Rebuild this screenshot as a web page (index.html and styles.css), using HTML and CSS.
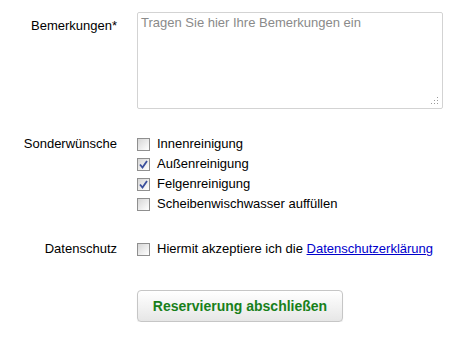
FILE: index.html
```html
<!DOCTYPE html>
<html>
<head>
    <title>Reservierung</title>
    <link rel="stylesheet" href="styles.css">
</head>
<body>
    <form class="booking-form">
        <div class="row row-notes">
            <label class="row-label" for="notes">Bemerkungen*</label>
            <div class="notes-wrap">
                <textarea id="notes" class="notes" placeholder="Tragen Sie hier Ihre Bemerkungen ein"></textarea>
                <svg class="grip" width="10" height="9" viewBox="0 0 10 9">
                    <rect x="7" y="0" width="1" height="1"/>
                    <rect x="4" y="3" width="1" height="1"/>
                    <rect x="7" y="3" width="1" height="1"/>
                    <rect x="1" y="6" width="1" height="1"/>
                    <rect x="4" y="6" width="1" height="1"/>
                    <rect x="7" y="6" width="1" height="1"/>
                </svg>
            </div>
        </div>

        <div class="row row-extras">
            <span class="row-label">Sonderwünsche</span>
            <div class="options">
                <label class="option"><span class="box"></span>Innenreinigung</label>
                <label class="option"><span class="box checked"><svg width="9" height="9" viewBox="0 0 9 9"><path d="M1 4.5 L3.5 7.5 L8 1" fill="none" stroke="#3a4f9c" stroke-width="1.8"/></svg></span>Außenreinigung</label>
                <label class="option"><span class="box checked"><svg width="9" height="9" viewBox="0 0 9 9"><path d="M1 4.5 L3.5 7.5 L8 1" fill="none" stroke="#3a4f9c" stroke-width="1.8"/></svg></span>Felgenreinigung</label>
                <label class="option"><span class="box"></span>Scheibenwischwasser auffüllen</label>
            </div>
        </div>

        <div class="row row-privacy">
            <span class="row-label">Datenschutz</span>
            <div class="options">
                <label class="option"><span class="box"></span>Hiermit akzeptiere ich die&nbsp;<a href="#">Datenschutzerklärung</a></label>
            </div>
        </div>

        <div class="row row-submit">
            <span class="row-label"></span>
            <button type="button" class="submit">Reservierung abschließen</button>
        </div>
    </form>
</body>
</html>
```

FILE: styles.css
```css
body {
    margin: 0;
    font-family: "Liberation Sans", Arial, sans-serif;
    font-size: 13px;
    line-height: 20px;
    color: #000;
    background: #fff;
}

.booking-form {
    padding-top: 12px;
}

.row {
    display: flex;
    column-gap: 20px;
}

.row-label {
    width: 117px;
    flex: none;
    text-align: right;
}

.row-notes .row-label {
    padding-top: 4px;
}

.notes-wrap {
    position: relative;
    width: 306px;
    height: 97px;
}

.notes {
    box-sizing: border-box;
    display: block;
    width: 306px;
    height: 97px;
    margin: 0;
    padding: 2px 3px;
    border: 1px solid #d3d3d3;
    border-radius: 2px;
    font-family: "Liberation Sans", Arial, sans-serif;
    font-size: 13px;
    line-height: 16px;
    resize: none;
    outline: none;
}

.notes::placeholder {
    color: #8a8a8a;
}

.grip {
    position: absolute;
    right: 3px;
    bottom: 3px;
    fill: #9a9a9a;
}

.row-extras {
    margin-top: 25px;
}

.row-privacy {
    margin-top: 25px;
}

.row-submit {
    margin-top: 31px;
}

.options {
    display: flex;
    flex-direction: column;
}

.option {
    display: flex;
    align-items: center;
    height: 20px;
    white-space: nowrap;
}

.box {
    box-sizing: border-box;
    width: 13px;
    height: 13px;
    margin: 1px 7px 0 0;
    border: 1px solid #8f8f8f;
    background: linear-gradient(135deg, #d6d6d6, #f7f7f7 80%, #fff);
    display: flex;
    align-items: center;
    justify-content: center;
}

.option a {
    color: #0000cc;
    text-decoration: underline;
}

.submit {
    width: 206px;
    height: 32px;
    padding: 0;
    border: 1px solid #c6c6c6;
    border-radius: 4px;
    background: linear-gradient(#ffffff, #f3f3f3 50%, #e6e6e6);
    box-shadow: 0 1px 1px rgba(0, 0, 0, 0.08);
    font-family: "Liberation Sans", Arial, sans-serif;
    font-size: 14px;
    font-weight: bold;
    color: #18801a;
    cursor: pointer;
}
```
